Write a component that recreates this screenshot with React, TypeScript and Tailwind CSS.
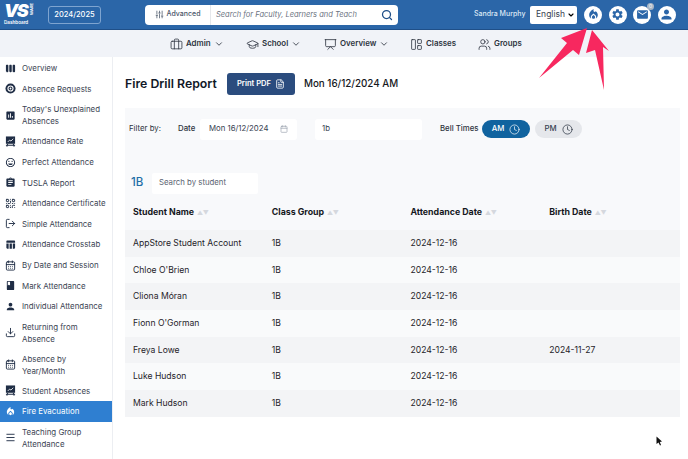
import {
  Briefcase,
  CalendarDays,
  Calendar,
  ChevronDown,
  Clock,
  Download,
  FileText,
  GraduationCap,
  LayoutPanelLeft,
  LogOut,
  Menu,
  Presentation,
  QrCode,
  Search,
  SlidersVertical,
  Users,
} from "lucide-react";
import {
  MdAssignment,
  MdBook,
  MdEmail,
  MdInsertChart,
  MdLocalFireDepartment,
  MdMood,
  MdPerson,
  MdSettings,
  MdTableChart,
  MdViewWeek,
} from "react-icons/md";

type IconProps = { className?: string };

const AtCircle = ({ className }: IconProps) => (
  <svg className={className} viewBox="0 0 12 12">
    <circle cx="6" cy="6" r="5.5" fill="currentColor" />
    <circle cx="6" cy="6" r="2.8" fill="none" stroke="#fff" strokeWidth="1.2" />
    <circle cx="6" cy="6" r="1" fill="#fff" />
  </svg>
);

const BoardIcon = ({ className }: IconProps) => (
  <svg className={className} viewBox="0 0 12 12">
    <path d="M1 0.5h10v8H1z" fill="currentColor" />
    <path d="M3 6.5l2-2 1.5 1L9 3" fill="none" stroke="#fff" strokeWidth="0.9" />
    <path d="M3 8.5L2 11.5M9 8.5l1 3M1 10h10" stroke="currentColor" strokeWidth="1.1" />
  </svg>
);

const sideItems = [
  { label: "Overview", icon: MdViewWeek },
  { label: "Absence Requests", icon: AtCircle },
  { label: "Today's Unexplained\nAbsences", icon: MdInsertChart, tall: true },
  { label: "Attendance Rate", icon: BoardIcon },
  { label: "Perfect Attendance", icon: MdMood },
  { label: "TUSLA Report", icon: MdAssignment },
  { label: "Attendance Certificate", icon: QrCode },
  { label: "Simple Attendance", icon: LogOut },
  { label: "Attendance Crosstab", icon: MdTableChart },
  { label: "By Date and Session", icon: CalendarDays },
  { label: "Mark Attendance", icon: MdBook },
  { label: "Individual Attendance", icon: MdPerson },
  { label: "Returning from\nAbsence", icon: Download, tall: true },
  { label: "Absence by\nYear/Month", icon: CalendarDays, tall: true },
  { label: "Student Absences", icon: BoardIcon },
  { label: "Fire Evacuation", icon: MdLocalFireDepartment, active: true },
  { label: "Teaching Group\nAttendance", icon: Menu, tall: true },
];

const students = [
  { name: "AppStore Student Account", birth: "" },
  { name: "Chloe O'Brien", birth: "" },
  { name: "Cliona Móran", birth: "" },
  { name: "Fionn O'Gorman", birth: "" },
  { name: "Freya Lowe", birth: "2024-11-27" },
  { name: "Luke Hudson", birth: "" },
  { name: "Mark Hudson", birth: "" },
];

const SortHeader = ({ label }: { label: string }) => (
  <div className="flex items-center gap-[3px] pl-2">
    <span className="text-[8.8px] font-bold text-[#15181d]">{label}</span>
    <span className="text-[6px] text-[#d5d8de] tracking-[-0.5px]">▲▼</span>
  </div>
);

const RoundIcon = ({ children }: { children: React.ReactNode }) => (
  <div className="relative w-[18px] h-[18px] rounded-full bg-white flex items-center justify-center text-[#2b66a8]">
    {children}
  </div>
);

const TopBar = () => (
  <header className="h-[30px] bg-[#2b66a8] border-b border-[#1f4f88] flex items-center">
    <div className="w-[48px] shrink-0 pl-[4px] flex flex-col text-white leading-none">
      <div className="flex items-start h-[15px]">
        <span className="text-[18px] font-black italic tracking-[-1.5px] leading-[15px]">VS</span>
        <span className="text-[4px] font-bold ml-[3px] [writing-mode:vertical-rl] rotate-180">WARE</span>
      </div>
      <span className="text-[4.6px] font-semibold mt-[3px]">Dashboard</span>
    </div>
    <div className="w-[53px] h-[18px] rounded-[3px] border border-[#7ea4d0] flex items-center justify-center text-white text-[7.5px] font-medium">
      2024/2025
    </div>
    <div className="ml-[44px] w-[253px] h-[20px] bg-white rounded-[4px] flex items-center text-[#4a5568]">
      <div className="w-[66px] h-full border-r border-[#e5e7eb] flex items-center justify-center gap-[3px] text-[7px] font-medium">
        <SlidersVertical className="w-[9px] h-[9px]" />
        Advanced
      </div>
      <span className="ml-[5px] text-[7.5px] italic text-[#6b7280]">Search for Faculty, Learners and Teach</span>
      <Search className="ml-auto mr-[5px] w-[12px] h-[12px] text-[#1f4f88]" strokeWidth={2.5} />
    </div>
    <span className="ml-[76px] w-[51px] text-[7px] font-medium text-[#dce8f5] whitespace-nowrap">Sandra Murphy</span>
    <div className="ml-[5px] w-[47px] h-[18px] bg-white rounded-[2px] flex items-center justify-between pl-[6px] pr-[2px] text-[8.5px] text-[#374151]">
      English
      <ChevronDown className="w-[8px] h-[8px] text-black" strokeWidth={3.5} />
    </div>
    <div className="ml-[7px] flex gap-[6.5px]">
      <RoundIcon>
        <MdLocalFireDepartment className="w-[13px] h-[13px]" />
      </RoundIcon>
      <RoundIcon>
        <MdSettings className="w-[13px] h-[13px]" />
      </RoundIcon>
      <RoundIcon>
        <MdEmail className="w-[13px] h-[13px]" />
        <span className="absolute -top-[3px] -right-[3px] w-[7px] h-[7px] rounded-full bg-[#a9b6c6] text-white text-[5px] leading-[7px] text-center">0</span>
      </RoundIcon>
      <RoundIcon>
        <MdPerson className="w-[15px] h-[15px]" />
      </RoundIcon>
    </div>
  </header>
);

const NavItem = ({ icon: Icon, label, chevron, className }: { icon: typeof Users; label: string; chevron?: boolean; className: string }) => (
  <div className={`flex items-center text-[#2d3440] ${className}`}>
    <Icon className="w-[13px] h-[13px]" strokeWidth={1.5} />
    <span className="ml-[3px] text-[7.9px] font-semibold">{label}</span>
    {chevron && <ChevronDown className="ml-[3px] w-[10px] h-[10px]" strokeWidth={2} />}
  </div>
);

const NavBar = () => (
  <nav className="h-[27px] bg-[#f1f3f8] flex items-center pl-[170px] pt-[1px]">
    <NavItem icon={Briefcase} label="Admin" chevron className="w-[76px]" />
    <NavItem icon={GraduationCap} label="School" chevron className="w-[78px]" />
    <NavItem icon={Presentation} label="Overview" chevron className="w-[86px]" />
    <NavItem icon={LayoutPanelLeft} label="Classes" className="w-[68px]" />
    <NavItem icon={Users} label="Groups" className="w-[60px]" />
  </nav>
);

const Sidebar = () => (
  <aside className="w-[113px] shrink-0 border-r border-[#eceef2] pt-[1px] h-[402px] overflow-hidden">
    {sideItems.map(({ label, icon: Icon, active, tall }) => (
      <div
        key={label}
        className={`flex items-center pl-[5px] pr-[2px] ${tall ? "h-[32px]" : "h-[20.6px]"} ${active ? "bg-[#2f7fd1] text-white" : "text-[#3b4453]"}`}
      >
        <Icon className={`shrink-0 w-[11px] h-[11px] mr-[6px] ${active ? "text-white" : "text-[#1f2d45]"}`} />
        <span className="text-[7.9px] leading-[12px] whitespace-pre-line">{label}</span>
      </div>
    ))}
  </aside>
);

const Filters = () => (
  <div className="h-[42px] flex items-center pl-[4px] text-[7.8px]">
    <span className="text-[#2d3440] w-[49px]">Filter by:</span>
    <span className="font-medium text-[#2d3440] w-[22px]">Date</span>
    <div className="w-[97px] h-[21px] bg-white rounded-[3px] flex items-center justify-between px-[9px] text-[#374151]">
      Mon 16/12/2024
      <Calendar className="w-[8px] h-[8px] text-[#9ca3af]" />
    </div>
    <div className="ml-[18px] w-[107px] h-[21px] bg-white rounded-[3px] flex items-center px-[7px] text-[#374151]">1b</div>
    <span className="ml-[18px] font-medium text-[#2d3440] w-[42px]">Bell Times</span>
    <div className="w-[48px] h-[18px] rounded-full bg-[#10639f] text-white flex items-center justify-center gap-[5px] font-medium">
      AM
      <Clock className="w-[11px] h-[11px]" strokeWidth={1.5} />
    </div>
    <div className="ml-[5px] w-[47px] h-[18px] rounded-full bg-[#e5e7eb] text-[#374151] flex items-center justify-center gap-[5px] font-medium">
      PM
      <Clock className="w-[11px] h-[11px] text-[#1f2937]" strokeWidth={1.5} />
    </div>
  </div>
);

const Report = () => (
  <main className="flex-1 pl-[12px] pr-[8px]">
    <div className="h-[51px] flex items-center pt-[2px]">
      <h1 className="w-[92px] mt-[1px] text-[12.3px] font-semibold text-[#111827] whitespace-nowrap">Fire Drill Report</h1>
      <button className="ml-[10px] w-[68px] h-[22px] rounded-[3px] bg-[#2b4c7e] text-white text-[7.6px] font-semibold flex items-center justify-center gap-[4px]">
        Print PDF
        <FileText className="w-[10px] h-[10px]" />
      </button>
      <span className="ml-[9px] mt-[1px] text-[9.8px] font-medium text-[#15181d]">Mon 16/12/2024 AM</span>
    </div>
    <div className="bg-[#f8f9fb]">
      <Filters />
      <div className="h-[22px] mt-[22px] flex items-center pl-[6px]">
        <span className="text-[11.5px] font-medium text-[#1f6fa8] w-[21px]">1B</span>
        <div className="w-[106px] h-[21px] bg-white rounded-[2px] flex items-center px-[7px] text-[7.8px] text-[#5b6472]">Search by student</div>
      </div>
      <div className="grid grid-cols-4 h-[36px] items-center">
        <SortHeader label="Student Name" />
        <SortHeader label="Class Group" />
        <SortHeader label="Attendance Date" />
        <SortHeader label="Birth Date" />
      </div>
      {students.map((s, i) => (
        <div key={s.name} className={`grid grid-cols-4 h-[26.7px] items-center text-[8.6px] text-[#1f2329] ${i % 2 === 0 ? "bg-[#f3f4f6]" : "bg-[#f9fafb]"}`}>
          <span className="pl-2">{s.name}</span>
          <span className="pl-2">1B</span>
          <span className="pl-2">2024-12-16</span>
          <span className="pl-2">{s.birth}</span>
        </div>
      ))}
    </div>
  </main>
);

const Arrows = () => (
  <svg className="absolute left-0 top-0 pointer-events-none" width="688" height="459" viewBox="0 0 688 459">
    <path d="M587 28 L561 38 L567 43 L539 78 L573 50 L579 55 Z" fill="#f7285f" />
    <path d="M592 30 L586 53 L595 50 L604 90 L603 47 L609 51 Z" fill="#f7285f" />
    <path d="M656.5 436.5 L656.5 444 L658.5 442.5 L660 445.5 L661 445 L659.8 442 L662 441.5 Z" fill="#111" />
  </svg>
);

export default function App() {
  return (
    <div className="relative w-[688px] h-[459px] overflow-hidden bg-white [font-family:Inter,'Liberation_Sans',sans-serif]">
      <TopBar />
      <NavBar />
      <div className="flex">
        <Sidebar />
        <Report />
      </div>
      <Arrows />
    </div>
  );
}
